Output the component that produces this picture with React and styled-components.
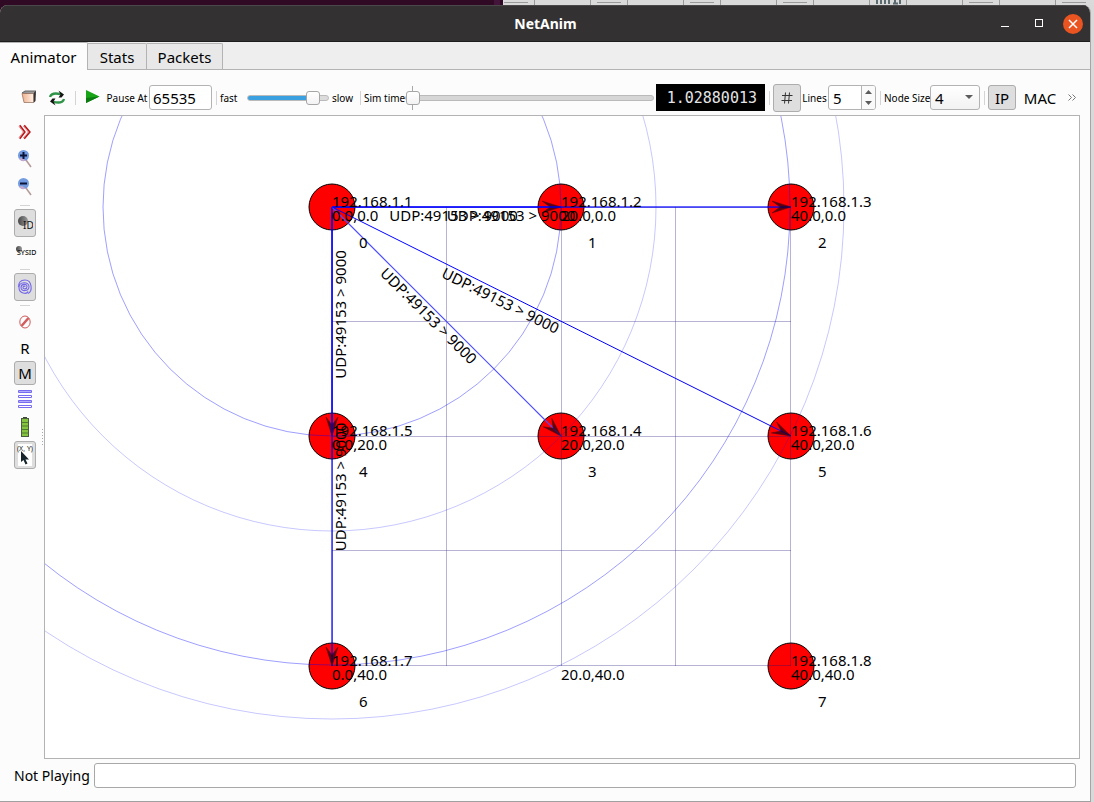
import React from 'react';
import styled, { createGlobalStyle, css } from 'styled-components';

const Global = createGlobalStyle`
  * { box-sizing: border-box; }
  body { margin: 0; background: #d9d9d9; }
  body, button, input, select, output { font-family: "Noto Sans", "Open Sans", sans-serif; font-size: 15px; color: #000; }
`;

const line = '#b3b3b3';

const Desktop = styled.div`
  display: flex;
  flex-direction: column;
  height: 100vh;
  padding-right: 3px;
  background: linear-gradient(90deg, #300a24 503px, #d9d9d9 503px);
`;
const Backdrop = styled.div`
  height: 5px;
  margin-right: -3px;
  flex: none;
  overflow: hidden;
  svg { display: block; }
`;
const Window = styled.main`
  flex: 1;
  min-height: 0;
  display: flex;
  flex-direction: column;
  background: #fcfcfc;
  border-radius: 8px 8px 0 0;
  border-right: 1px solid #a5a5a5;
  border-bottom: 1px solid #a0a0a0;
  overflow: hidden;
`;
const TitleBar = styled.header`
  display: grid;
  grid-template-columns: 1fr auto 1fr;
  align-items: center;
  height: 37px;
  margin-right: -1px;
  flex: none;
  background: #333131;
  border-top: 1px solid #4a4848;
  border-bottom: 1px solid #1e1d1d;
`;
const Title = styled.h1`
  grid-column: 2;
  margin: 0;
  font-size: 14px;
  line-height: 20px;
  font-weight: 700;
  color: #fff;
`;
const WindowButtons = styled.div`
  display: flex;
  justify-content: flex-end;
  gap: 14px;
  padding-right: 8px;
`;
const WindowButton = styled.button`
  width: 20px;
  height: 20px;
  padding: 0;
  border: 0;
  border-radius: 10px;
  background: ${(p) => (p.$close ? '#e95420' : 'transparent')};
  svg { display: block; }
`;

const TabBar = styled.nav`
  display: flex;
  align-items: flex-end;
  height: 28px;
  flex: none;
  background: #eee;
  border-bottom: 1px solid ${line};
`;
const Tab = styled.button`
  height: ${(p) => (p.$active ? 28 : 26)}px;
  width: ${(p) => p.$w}px;
  margin-bottom: ${(p) => (p.$active ? -1 : 0)}px;
  padding: 0;
  border: 1px solid ${line};
  border-width: 1px 1px 0 0;
  border-radius: 0 2px 0 0;
  background: ${(p) => (p.$active ? '#fcfcfc' : '#e8e8e8')};
  line-height: 24px;
`;

const Toolbar = styled.div`
  display: flex;
  align-items: center;
  height: 45px;
  flex: none;
  padding: 10px 10px 0 14px;
`;
const Separator = styled.span`
  width: 8px;
  height: 14px;
  flex: none;
  background: linear-gradient(#d4d4d4, #d4d4d4) center / 1px 100% no-repeat;
`;
const Label = styled.label`
  width: ${(p) => p.$w}px;
  flex: none;
  font-size: 10px;
  line-height: 14px;
  white-space: nowrap;
  text-align: ${(p) => p.$align || 'left'};
`;
const ToolButton = styled.button`
  display: flex;
  align-items: center;
  justify-content: center;
  flex: none;
  width: ${(p) => p.$w || 22}px;
  height: ${(p) => p.$h || 28}px;
  padding: 0;
  border: 1px solid transparent;
  border-radius: 3px;
  background: transparent;
  ${(p) => p.$pressed && css`
    border-color: #adadad;
    background: #dedede;
  `}
`;
const field = css`
  height: 25px;
  border: 1px solid ${line};
  border-radius: 3px;
  background: #fff;
`;
const TextField = styled.input`
  ${field}
  width: 63px;
  padding: 0 3px;
`;
const Range = styled.input`
  appearance: none;
  margin: 0;
  height: 24px;
  min-width: 0;
  flex: ${(p) => (p.$grow ? '1 1 0' : '0 0 82px')};
  background: ${(p) => (p.$grow ? 'linear-gradient(#a8a8a8, #a8a8a8) 7px 0 / 1px 100% no-repeat' : 'transparent')};
  &::-webkit-slider-runnable-track {
    height: 6px;
    border: 1px solid #bababa;
    border-radius: 3px;
    background: ${(p) => (p.$grow ? '#d6d6d6' : 'linear-gradient(90deg, #3ba0e0 80%, #dcdcdc 80%)')};
  }
  &::-webkit-slider-thumb {
    appearance: none;
    width: 14px;
    height: 14px;
    margin-top: -5px;
    border: 1px solid #a6a6a6;
    border-radius: 3px;
    background: linear-gradient(#fff, #f3f3f3);
  }
`;
const Lcd = styled.output`
  display: flex;
  align-items: center;
  justify-content: flex-end;
  width: 109px;
  height: 27px;
  flex: none;
  margin-left: 2px;
  padding-right: 8px;
  background: #000;
  color: #e4e4e4;
  font-family: "DejaVu Sans Mono", "Liberation Mono", monospace;
  font-size: 15px;
  line-height: 26px;
`;
const SpinBox = styled.div`
  ${field}
  display: flex;
  width: 48px;
  flex: none;
  overflow: hidden;
  input {
    width: 33px;
    padding: 0 4px;
    border: 0;
    border-right: 1px solid ${line};
    background: transparent;
  }
`;
const SpinButtons = styled.div`
  flex: 1;
  display: flex;
  flex-direction: column;
  button {
    flex: 1;
    display: flex;
    align-items: center;
    justify-content: center;
    padding: 0;
    border: 0;
    background: #fafafa;
  }
`;
const SelectBox = styled.div`
  position: relative;
  flex: none;
  select {
    ${field}
    display: block;
    appearance: none;
    width: 50px;
    padding: 0 4px;
    background: linear-gradient(#fff, #f2f2f2);
  }
  svg {
    position: absolute;
    right: 7px;
    top: 10px;
    pointer-events: none;
  }
`;

const Workspace = styled.div`
  flex: 1;
  min-height: 0;
  display: flex;
  padding-right: 10px;
`;
const Sidebar = styled.aside`
  display: flex;
  flex-direction: column;
  align-items: center;
  width: 36px;
  flex: none;
  padding: 4px 0 0 14px;
`;
const SideRule = styled.span`
  width: 10px;
  height: 8px;
  flex: none;
  background: linear-gradient(#d4d4d4, #d4d4d4) center / 100% 1px no-repeat;
`;
const Splitter = styled.div`
  width: 8px;
  flex: none;
  background: repeating-linear-gradient(#a8a8a8 0 1px, transparent 1px 3px) 6px center / 1px 16px no-repeat;
`;
const Canvas = styled.section`
  flex: 1;
  min-width: 0;
  border: 1px solid ${line};
  background: #fff;
  overflow: hidden;
  svg { display: block; width: 100%; height: 100%; }
  text { font-size: 15px; }
`;
const StatusBar = styled.footer`
  display: flex;
  align-items: center;
  gap: 1px;
  flex: none;
  padding: 4px 14px 13px 14px;
  line-height: 25px;
  label { white-space: nowrap; font-size: 14px; width: 79px; }
  input { ${field} flex: 1; min-width: 0; border-color: #a8a8a8; }
`;

const XS = [287, 516, 746];
const YS = [91, 320, 550];
const NODES = [
  [0, 0, '192.168.1.1', '0.0,0.0', '0'],
  [1, 0, '192.168.1.2', '20.0,0.0', '1'],
  [2, 0, '192.168.1.3', '40.0,0.0', '2'],
  [0, 1, '192.168.1.5', '0.0,20.0', '4'],
  [1, 1, '192.168.1.4', '20.0,20.0', '3'],
  [2, 1, '192.168.1.6', '40.0,20.0', '5'],
  [0, 2, '192.168.1.7', '0.0,40.0', '6'],
  [2, 2, '192.168.1.8', '40.0,40.0', '7'],
];
const PACKETS = [
  { to: [1, 0], w: 2, color: '#0000ff99' },
  { to: [2, 0], w: 2, color: '#0000ff99' },
  { to: [0, 1], w: 2, color: '#0000ff99' },
  { to: [0, 2], w: 2, color: '#0000ff99' },
  { to: [1, 1], w: 1.2, color: '#4c4cff' },
  { to: [2, 1], w: 1, color: '#0000ff' },
];

function Packet({ to, w, color }) {
  const dx = XS[to[0]] - XS[0];
  const dy = YS[to[1]] - YS[0];
  const length = Math.hypot(dx, dy);
  const angle = (Math.atan2(dy, dx) * 180) / Math.PI;
  const upright = dx === 0;
  return (
    <g transform={`translate(${XS[0]} ${YS[0]})`}>
      <path d={`M0 0L${dx} ${dy}`} fill="none" stroke={color} strokeWidth={w} />
      <path
        d="M0 0-19-6-11 0-19 6Z"
        transform={`translate(${dx} ${dy}) rotate(${angle})`}
        fill="#180018"
        opacity=".7"
        stroke="#180018"
        strokeWidth=".5"
      />
      <text
        transform={upright ? `translate(14 ${(length * 3) / 4}) rotate(-90)` : `rotate(${angle}) translate(${length / 4} 14)`}
      >
        {'UDP:49153 > 9000'}
      </text>
    </g>
  );
}

function Scene() {
  return (
    <svg role="img" aria-label="Network animation">
      {NODES.map(([c, r]) => (
        <circle key={`${c}${r}`} cx={XS[c]} cy={YS[r]} r="23" fill="#f00" stroke="#000" />
      ))}
      <g stroke="#1c1478" strokeOpacity=".32">
        {[287.5, 401.5, 516.5, 630.5, 745.5].map((x) => <line key={x} x1={x} x2={x} y1="91" y2="550" />)}
        {[91.5, 205.5, 320.5, 434.5, 549.5].map((y) => <line key={y} y1={y} y2={y} x1="287" x2="746" />)}
      </g>
      <g fill="none" stroke="#00f">
        <circle cx="287" cy="91" r="229" opacity=".38" />
        <circle cx="287" cy="91" r="458" opacity=".38" />
        <circle cx="287" cy="91" r="324" opacity=".22" />
        <circle cx="287" cy="91" r="512" opacity=".22" />
      </g>
      {PACKETS.map((p) => <Packet key={p.to.join()} {...p} />)}
      {NODES.map(([c, r, ip, pos, id]) => (
        <g key={ip} transform={`translate(${XS[c]} ${YS[r]})`}>
          <text x="0" y="0">{ip}</text>
          <text x="0" y="14">{pos}</text>
          <text x="27" y="41">{id}</text>
        </g>
      ))}
      <text x="516" y="564">20.0,40.0</text>
    </svg>
  );
}

function BackdropArt() {
  return (
    <svg width="1094" height="5">
      <rect width="503" height="5" fill="#300a24" />
      <rect x="494" width="6" height="5" fill="#43153a" />
      <rect x="503" width="591" height="5" fill="#dadada" />
      <path d="M504 2.500h24" stroke="#9a9a9a" />
      {[534, 627, 720, 813, 906, 999].map((x) => (
        <g key={x}>
          <path d={`M${x + 0.5} 0v5M${x + 56.5} 0v5`} stroke="#9a9a9a" />
          <path d={`M${x + 63} 2.5h24`} stroke="#9a9a9a" />
        </g>
      ))}
      <rect x="872" width="33" height="5" fill="#dadada" />
      <path d="M877 0v4M881 0v4M885 0v4M889 0v4M895 0v4M900 0v4M893 3.500h5" stroke="#5b6b70" strokeWidth="2" />
    </svg>
  );
}

const FolderIcon = () => (
  <svg width="16" height="18" viewBox="0 0 16 18">
    <defs>
      <linearGradient id="paper" x1="0" x2="1">
        <stop offset="0" stopColor="#eeb08c" />
        <stop offset="1" stopColor="#fff1e8" />
      </linearGradient>
    </defs>
    <path d="M1 4 4 2H15L12 5Z" fill="#9b9b9b" stroke="#666" />
    <path d="M12 5 15 2 14.500 12 12.500 14Z" fill="#333" />
    <path d="M1 4.500H12.500V13.500H3Z" fill="url(#paper)" stroke="#8d6a58" strokeWidth=".7" />
  </svg>
);
const ReloadIcon = () => (
  <svg width="16" height="16" viewBox="0 0 16 16">
    <path d="M1 7C2 3.500 6.500 2.800 12 4.200" fill="none" stroke="#2f9448" strokeWidth="2.400" />
    <path d="M9.500 .5 15 4.500 12.500 7.500 9.500 7.500 11.500 4.500Z" fill="#151515" />
    <path d="M15 9C14 12.500 9.500 13.200 4 11.800" fill="none" stroke="#2f9448" strokeWidth="2.400" />
    <path d="M6.500 15.500 1 11.500 3.500 8.500 6.500 8.500 4.500 11.500Z" fill="#151515" />
  </svg>
);
const PlayIcon = () => (
  <svg width="15" height="17" viewBox="0 0 15 17">
    <path d="M1 1 14.500 7.500 1 14Z" fill="#17a417" />
    <path d="M1 14 14.500 7.500 1 9Z" fill="#0b7a10" />
  </svg>
);
const FastIcon = () => (
  <svg width="14" height="16" viewBox="0 0 14 16" fill="none">
    <path d="M1.500 1.500 6.500 8 1.500 14.500M6 1.500 11.500 8 6 14.500" stroke="#b8161b" strokeWidth="2.200" />
    <path d="M1 2 5.500 8 1 14M5.500 2 10.500 8 5.500 14" stroke="#f6c4c4" strokeWidth=".8" />
  </svg>
);
const MagnifierIcon = ({ plus }) => (
  <svg width="16" height="20" viewBox="0 0 16 20">
    <path d="M9 11 14 18" stroke="#b39a98" strokeWidth="1.500" />
    <circle cx="6.500" cy="6.500" r="5.500" fill="#739be0" />
    <path d="M2 9.500A5.500 5.500 0 0 0 9 11.500L5 9Z" fill="#c2a9cf" />
    <path d={plus ? 'M3 6.500h7M6.500 3v7' : 'M3 6.500h7'} stroke="#0c1438" strokeWidth="2" />
  </svg>
);
const Ball = ({ x, y, r }) => (
  <>
    <defs>
      <linearGradient id={`ball${r}`}>
        <stop offset="0" stopColor="#484848" />
        <stop offset="1" stopColor="#9a9a9a" />
      </linearGradient>
    </defs>
    <circle cx={x} cy={y} r={r} fill={`url(#ball${r})`} />
  </>
);
const IdIcon = () => (
  <svg width="16" height="18" viewBox="0 0 16 18">
    <Ball x={6} y={7} r={5} />
    <text x="6" y="15" fontSize="10" fill="#111">ID</text>
  </svg>
);
const SysIdIcon = () => (
  <svg width="22" height="16" viewBox="0 0 22 16" overflow="visible">
    <Ball x={5} y={6} r={3} />
    <text x="3" y="12" fontSize="7" fontWeight="500" fill="#111">SYSID</text>
  </svg>
);
const SpiralIcon = () => (
  <svg width="16" height="18" viewBox="0 0 16 18" fill="none" stroke="#7468e8" strokeWidth="1.100">
    <path d="M8 9C8 7.500 6 8 6 9.500 6 11.500 10 11.500 10 8.500 10 5.500 4 5.500 4 9.500 4 14 12 13.500 12 8.500 12 3.500 2 3 2 9.500 2 16 10 16.500 11 13.500M11 15.500C16 13 15 2 8 2 3 2 1.500 5 1.500 9" />
  </svg>
);
const BlockIcon = () => (
  <svg width="12" height="14" viewBox="0 0 12 14" fill="none" stroke="#d25b5b">
    <ellipse cx="6" cy="7" rx="5.200" ry="6" />
    <path d="M2.500 11 9.500 3" strokeWidth="2.500" />
  </svg>
);
const QueueIcon = () => (
  <svg width="14" height="20" viewBox="0 0 14 20" stroke="#776cf0">
    {[1.5, 6.5, 11.5, 16.5].map((y, i) => (
      <path key={y} d={`M.5 ${y}H13.500v2H.5Z`} fill={i % 2 ? '#fff' : '#b3acfa'} />
    ))}
  </svg>
);
const BatteryIcon = () => (
  <svg width="10" height="20" viewBox="0 0 10 20">
    <rect x="3" width="4" height="2" fill="#3c4a34" />
    <rect x="1.500" y="1.500" width="7" height="18" fill="#86c440" stroke="#4c5c40" />
    <path d="M2 5.500h6M2 9h6M2 12.500h6M2 16h6" stroke="#4f7a2c" />
  </svg>
);
const PointerIcon = () => (
  <svg width="16" height="22" viewBox="0 0 16 22">
    <rect x="1" y="0" width="14" height="22" fill="#fff" />
    <text x="0" y="7" fontSize="7" fill="#222">(X, Y)</text>
    <path d="M4 7V18L6.500 16 8.500 20.500 10.500 19.500 8.500 15.500H12Z" fill="#16252b" />
  </svg>
);
const HashIcon = () => (
  <svg width="12" height="12" viewBox="0 0 12 12" stroke="#333">
    <path d="M4.500 .5 3.500 11.500M8.500 .5 7.500 11.500M1 3.500H11.500M.5 8.500H11" />
  </svg>
);
const Triangle = ({ up, w = 7 }) => (
  <svg width={w} height="4" viewBox="0 0 8 4" preserveAspectRatio="none">
    <path d={up ? 'M0 4 4 0 8 4Z' : 'M0 0H8L4 4Z'} fill="#5c5c5c" />
  </svg>
);

export default function App() {
  return (
    <>
      <Global />
      <Desktop>
        <Backdrop><BackdropArt /></Backdrop>
        <Window>
          <TitleBar>
            <Title>NetAnim</Title>
            <WindowButtons>
              <WindowButton aria-label="Minimize">
                <svg width="20" height="20"><path d="M6 12.500h8" stroke="#fff" /></svg>
              </WindowButton>
              <WindowButton aria-label="Maximize">
                <svg width="20" height="20"><rect x="6.500" y="5.500" width="7" height="7" fill="none" stroke="#fff" /></svg>
              </WindowButton>
              <WindowButton aria-label="Close" $close>
                <svg width="20" height="20"><path d="M6 6l8 8M14 6l-8 8" stroke="#fff" strokeWidth="1.500" /></svg>
              </WindowButton>
            </WindowButtons>
          </TitleBar>
          <TabBar>
            <Tab $active $w={88}>Animator</Tab>
            <Tab $w={59}>Stats</Tab>
            <Tab $w={76}>Packets</Tab>
          </TabBar>
          <Toolbar>
            <ToolButton $w={29} aria-label="Open"><FolderIcon /></ToolButton>
            <ToolButton $w={28} aria-label="Reload"><ReloadIcon /></ToolButton>
            <Separator />
            <ToolButton $w={26} aria-label="Play"><PlayIcon /></ToolButton>
            <Label htmlFor="pause" $w={44} $align="center">Pause At</Label>
            <TextField id="pause" defaultValue="65535" />
            <Separator />
            <Label htmlFor="speed" $w={27}>fast</Label>
            <Range id="speed" type="range" min="0" max="100" defaultValue="88" />
            <Label htmlFor="speed" $w={27} $align="center">slow</Label>
            <Separator />
            <Label htmlFor="time" $w={41}>Sim time</Label>
            <Range id="time" type="range" min="0" max="100" defaultValue="0" $grow />
            <Lcd>1.02880013</Lcd>
            <Separator />
            <ToolButton $w={28} $pressed aria-label="Grid"><HashIcon /></ToolButton>
            <Label htmlFor="lines" $w={27} $align="center">Lines</Label>
            <SpinBox>
              <input id="lines" defaultValue="5" />
              <SpinButtons>
                <button aria-label="More lines"><Triangle up /></button>
                <button aria-label="Fewer lines"><Triangle /></button>
              </SpinButtons>
            </SpinBox>
            <Separator />
            <Label htmlFor="size" $w={46}>Node Size</Label>
            <SelectBox>
              <select id="size" defaultValue="4"><option>4</option></select>
              <Triangle w={8} />
            </SelectBox>
            <Separator />
            <ToolButton $w={28} $h={25} $pressed>IP</ToolButton>
            <ToolButton $w={48} $h={25}>MAC</ToolButton>
            <ToolButton $w={16} $h={25} aria-label="More tools">
              <svg width="9" height="8" fill="none" stroke="#777"><path d="M.5 .5 3.500 3.500 .5 6.500M4.500 .5 7.500 3.500 4.500 6.500" /></svg>
            </ToolButton>
          </Toolbar>
          <Workspace>
            <Sidebar>
              <ToolButton $h={26} aria-label="Fast forward"><FastIcon /></ToolButton>
              <ToolButton aria-label="Zoom in"><MagnifierIcon plus /></ToolButton>
              <ToolButton aria-label="Zoom out"><MagnifierIcon /></ToolButton>
              <SideRule />
              <ToolButton $pressed aria-label="Node ID"><IdIcon /></ToolButton>
              <ToolButton aria-label="System ID"><SysIdIcon /></ToolButton>
              <SideRule />
              <ToolButton $pressed aria-label="Wireless circles"><SpiralIcon /></ToolButton>
              <SideRule />
              <ToolButton $h={26} aria-label="Block packets"><BlockIcon /></ToolButton>
              <ToolButton $h={26}>R</ToolButton>
              <ToolButton $h={24} $pressed>M</ToolButton>
              <ToolButton aria-label="Queues"><QueueIcon /></ToolButton>
              <ToolButton aria-label="Battery"><BatteryIcon /></ToolButton>
              <ToolButton $pressed aria-label="Pointer position"><PointerIcon /></ToolButton>
            </Sidebar>
            <Splitter />
            <Canvas><Scene /></Canvas>
          </Workspace>
          <StatusBar>
            <label htmlFor="status">Not Playing</label>
            <input id="status" />
          </StatusBar>
        </Window>
      </Desktop>
    </>
  );
}
